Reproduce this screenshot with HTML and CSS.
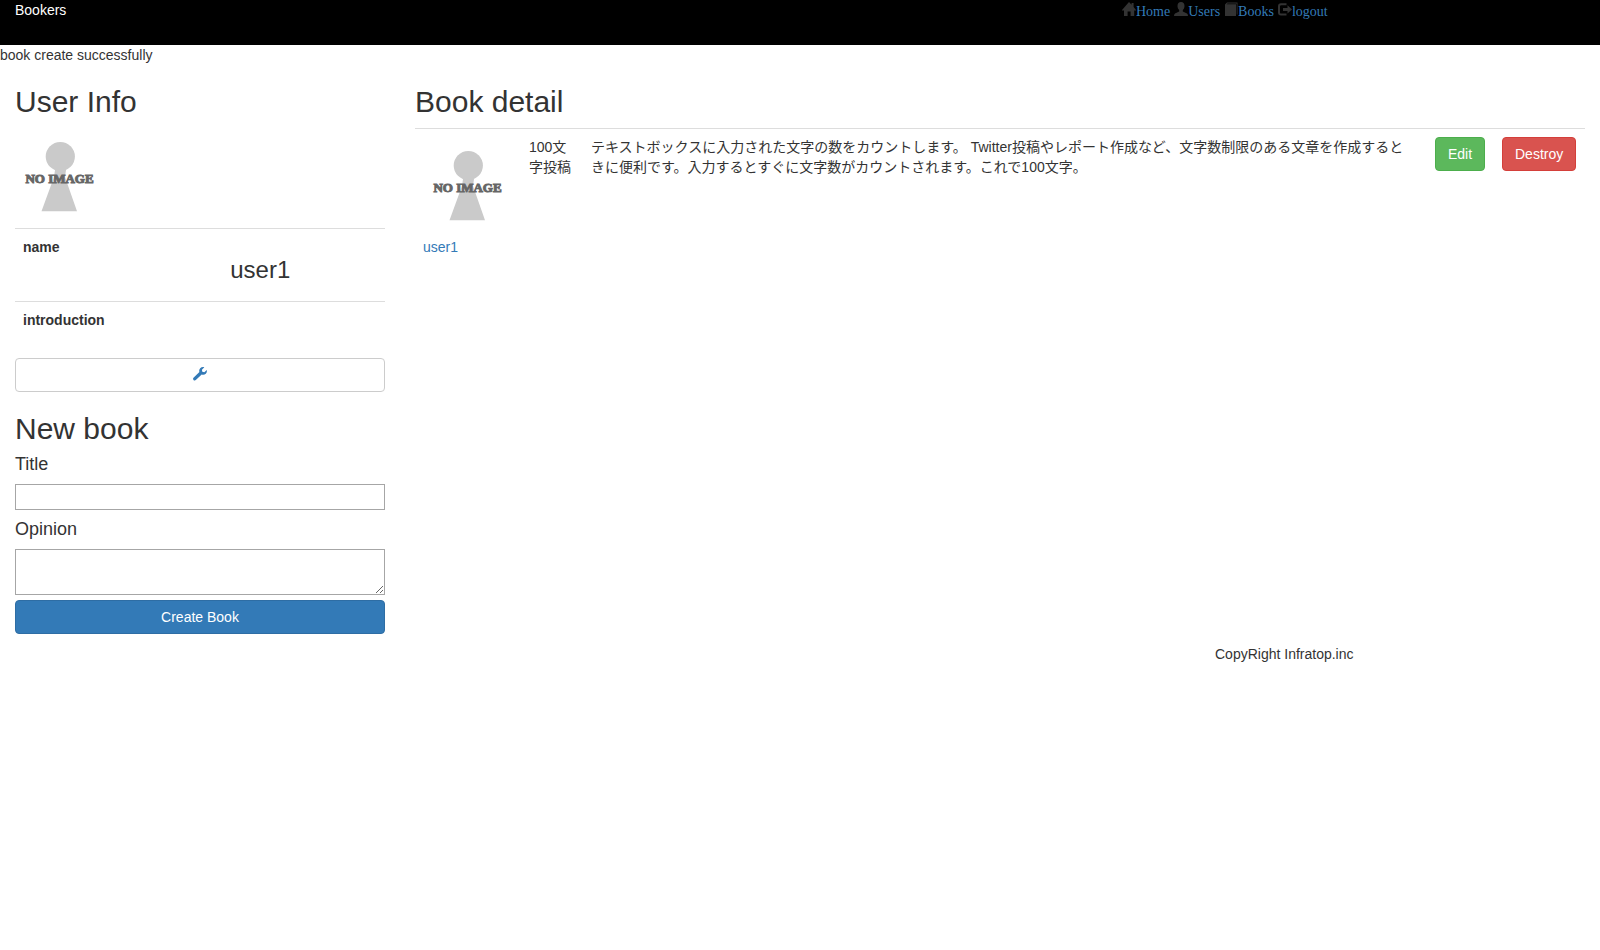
FILE: index.html
```html
<!DOCTYPE html>
<html lang="ja">
<head>
<meta charset="utf-8">
<title>Bookers</title>
<link rel="stylesheet" href="styles.css">
</head>
<body>
<header class="header">
  <div class="brand">Bookers</div>
  <nav class="nav">
    <span class="nav-item"><svg class="icon" viewBox="0 0 14 14"><path d="M7 0L9.600 2.700V1H11.600V4.900L14 7.900V8.400H12.200V14H8.600V9.500H5.600V14H2V8.400H0V7.900z"/></svg><a href="#">Home</a></span>
    <span class="nav-item"><svg class="icon" viewBox="0 0 14 14"><path d="M7 0C9.200 0 10.500 1.600 10.500 3.900C10.500 5.700 9.700 7.100 8.800 7.900V9.400L13 11.500Q14 12.100 14 14H0Q0 12.100 1 11.500L5.200 9.400V7.900C4.300 7.100 3.500 5.700 3.500 3.900C3.500 1.600 4.800 0 7 0z"/></svg><a href="#">Users</a></span>
    <span class="nav-item"><svg class="icon" viewBox="0 0 14 14"><path d="M3 .5H13.500V12.500H12.700V1.400H3.500L2.500 2.300H12V14H1V2.500z"/></svg><a href="#">Books</a></span>
    <span class="nav-item"><svg class="icon" viewBox="0 0 14 14"><path d="M8.500 1.300H3Q0 1.300 0 4.300V10.600Q0 13.600 3 13.600H8.500V11.600H3.200Q2 11.600 2 10.400V4.500Q2 3.300 3.200 3.300H8.500z"/><path d="M9.500 3.300L14 7.400L9.500 11.500V9H5V5.900H9.500z"/></svg><a href="#">logout</a></span>
  </nav>
</header>
<p class="notice">book create successfully</p>
<main class="row">
  <aside class="sidebar">
    <h2>User Info</h2>
    <svg class="avatar" viewBox="0 0 90 100">
      <circle cx="45.300" cy="28.500" r="14.600"/>
      <path d="M40 42H51L50 49L62 83.200H26.500L39 49z"/>
      <text x="44.500" y="55" text-anchor="middle">NO IMAGE</text>
    </svg>
    <table class="table user-table">
      <tr><th>name</th><td><h3>user1</h3></td></tr>
      <tr><th>introduction</th><td></td></tr>
    </table>
    <a class="btn btn-default btn-block" href="#" aria-label="Edit profile"><svg class="wrench" viewBox="0 0 14 14"><path d="M13.800 3.100L11.300 5.200L9.300 4.700L8.900 2.800L11.300.2C9.800-.2 8.200.1 7.200 1.200C6.200 2.200 6 3.600 6.400 4.900L.5 10.800C-.1 11.400-.1 12.300.5 13C1.100 13.700 2.200 13.700 2.800 13.100L8.700 7.400C10.100 8 11.700 7.700 12.800 6.700C13.800 5.700 14.100 4.400 13.800 3.100z"/></svg></a>
    <h2>New book</h2>
    <form>
      <label for="title">Title</label>
      <input id="title" type="text">
      <label for="opinion">Opinion</label>
      <textarea id="opinion" rows="2"></textarea>
      <button class="btn btn-primary btn-block" type="button">Create Book</button>
    </form>
  </aside>
  <section class="detail">
    <h2>Book detail</h2>
    <table class="table book-table">
      <colgroup><col class="col-user"><col class="col-title"><col><col class="col-edit"><col class="col-destroy"></colgroup>
      <tr>
        <td>
          <svg class="avatar" viewBox="0 0 90 100">
            <circle cx="45.300" cy="28.500" r="14.600"/>
            <path d="M40 42H51L50 49L62 83.200H26.500L39 49z"/>
            <text x="44.500" y="55" text-anchor="middle">NO IMAGE</text>
          </svg>
          <a href="#">user1</a>
        </td>
        <td>100文字投稿</td>
        <td class="opinion">テキストボックスに入力された文字の数をカウントします。 Twitter投稿やレポート作成など、文字数制限のある文章を作成するときに便利です。入力するとすぐに文字数がカウントされます。これで100文字。</td>
        <td><a class="btn btn-success" href="#">Edit</a></td>
        <td><a class="btn btn-danger" href="#">Destroy</a></td>
      </tr>
    </table>
  </section>
</main>
<footer class="footer">CopyRight Infratop.inc</footer>
</body>
</html>
```
FILE: styles.css
```css
* { box-sizing: border-box; }
body {
  margin: 0;
  background: #fff;
  color: #333;
  font: 14px/20px "Liberation Sans", "Noto Sans CJK JP", sans-serif;
}
a { color: #337ab7; text-decoration: none; }
h2, h3 { font-weight: 500; }
h2 { margin: 20px 0 10px; font-size: 30px; line-height: 33px; }
h3 { margin: 20px 0 10px; font-size: 24px; line-height: 26px; }

.header { display: flex; height: 45px; background: #000; color: #fff; }
.brand { width: 70%; padding-left: 15px; }
.nav {
  display: flex;
  gap: 4px;
  padding: 2px;
  font-family: "Liberation Serif", serif;
}
.nav-item { display: flex; align-items: flex-start; }
.icon { width: 14px; height: 14px; fill: #333; }
.notice { margin: 0; }

.row { display: flex; }
.sidebar { width: 25%; padding: 0 15px; }
.detail { width: 75%; padding: 0 15px; }
.avatar { display: block; width: 90px; height: 100px; fill: #cacaca; }
.avatar text {
  font: bold 13px "Liberation Serif", serif;
  fill: #666;
  stroke: #666;
  stroke-width: 1px;
}

.table { width: 100%; border-collapse: collapse; table-layout: fixed; }
.table th, .table td {
  padding: 8px;
  border-top: 1px solid #ddd;
  text-align: left;
  vertical-align: top;
}
.user-table { margin-bottom: 20px; }
.user-table th { width: 56%; }
.col-user { width: 106px; }
.col-title { width: 62px; }
.col-edit { width: 67px; }
.col-destroy { width: 91px; }
.table .opinion { padding-right: 20px; }

.btn {
  display: inline-block;
  padding: 6px 12px;
  border: 1px solid transparent;
  border-radius: 4px;
  color: #fff;
  font: inherit;
  text-align: center;
  white-space: nowrap;
}
.btn-block { display: block; width: 100%; }
.btn-default { height: 34px; border-color: #ccc; background: #fff; }
.btn-primary { border-color: #2e6da4; background: #337ab7; }
.btn-success { border-color: #4cae4c; background: #5cb85c; }
.btn-danger { border-color: #d43f3a; background: #d9534f; }
.wrench { width: 14px; height: 14px; margin-top: 2px; fill: #337ab7; vertical-align: top; }

form label { display: block; margin: 10px 0; font-size: 18px; line-height: 19px; }
input, textarea {
  display: block;
  width: 100%;
  margin: 0;
  padding: 2px;
  border: 1px solid #a6a6a6;
  border-radius: 0;
  background: #fff;
  color: inherit;
  font: inherit;
}
input { height: 26px; }
textarea { height: 46px; margin-bottom: 5px; resize: vertical; }
.footer { margin: 10px 0 0 75%; padding-left: 15px; }
```
